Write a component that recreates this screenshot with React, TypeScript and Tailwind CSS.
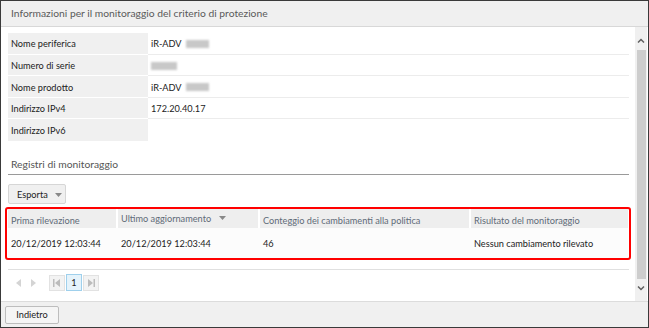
import React from 'react';

// Info rows shown at the top of the dialog
const INFO_ROWS: { label: string; value: string; blur?: 'model' | 'serial' }[] = [
  { label: 'Nome periferica', value: 'iR-ADV', blur: 'model' },
  { label: 'Numero di serie', value: '', blur: 'serial' },
  { label: 'Nome prodotto', value: 'iR-ADV', blur: 'model' },
  { label: 'Indirizzo IPv4', value: '172.20.40.17' },
  { label: 'Indirizzo IPv6', value: '' },
];

const Caret = () => (
  <svg width="7" height="4" viewBox="0 0 7 4" className="inline-block">
    <path d="M0 0 L7 0 L3.5 4 Z" fill="#888" />
  </svg>
);

const Blurred = ({ w }: { w: number }) => (
  <span className="inline-block h-[8px] bg-[#c8c8c8] blur-[1.2px] align-middle" style={{ width: w }} />
);

export default function App() {
  return (
    <div
      className="w-[649px] h-[328px] border border-[#3a3a3a] bg-white flex flex-col overflow-hidden text-[9.2px] text-[#222]"
      style={{ fontFamily: 'Lato, "Noto Sans", sans-serif' }}
    >
      {/* Header */}
      <div className="h-[26px] shrink-0 bg-[#f0f0f0] border-b border-[#d8d8d8] flex items-center pl-[10px] pt-px text-[10.3px] text-[#5a5a5a]">
        Informazioni per il monitoraggio del criterio di protezione
      </div>

      {/* Scrollable body */}
      <div className="flex-1 flex min-h-0">
        <div className="flex-1 pl-[7px] pr-[6px] pt-[6px]">
          {/* Info table */}
          <div className="flex flex-col">
            {INFO_ROWS.map((r, i) => (
              <div key={r.label} className={`flex h-[21.6px] ${i < INFO_ROWS.length - 1 ? 'border-b border-[#ececec]' : ''}`}>
                <div className={`w-[140px] bg-[#f0f0f0] flex items-center pl-[3px] pt-[2px] ${i < INFO_ROWS.length - 1 ? 'border-b border-white -mb-px' : ''}`}>
                  {r.label}
                </div>
                <div className="flex-1 flex items-center gap-[4px] pl-[3px] pt-[2px] bg-white">
                  {r.value && <span>{r.value}</span>}
                  {r.blur === 'model' && <Blurred w={23} />}
                  {r.blur === 'serial' && <Blurred w={26} />}
                </div>
              </div>
            ))}
          </div>

          {/* Section title */}
          <div className="mt-[16px] pl-[3px] pb-[2px] border-b border-[#9a9a9a] text-[10.3px] text-[#555]">
            Registri di monitoraggio
          </div>

          {/* Esporta button */}
          <div className="mt-[9px]">
            <button className="h-[20px] w-[58px] bg-[#f0f0f0] border border-[#d6d6d6] rounded-[2px] flex items-center gap-[7px] pl-[8px] pt-px text-[9.2px] text-[#222]">
              Esporta <Caret />
            </button>
          </div>

          {/* Log table */}
          <div className="mt-[3px] -ml-[3px] mr-[-2px] border-2 border-[#ff0000] rounded-[3px] px-[1px]">
            <div className="flex h-[19px] bg-[#eeeeee] text-[#5f6b78]">
              <div className="w-[110px] flex items-center pl-[3px] pt-[3px] border-r-2 border-white">Prima rilevazione</div>
              <div className="w-[142px] flex items-center gap-[8px] pl-[3px] pb-px border-r-2 border-white">
                Ultimo aggiornamento <Caret />
              </div>
              <div className="w-[211px] flex items-center pl-[3px] pt-[3px] border-r-2 border-white">
                Conteggio dei cambiamenti alla politica
              </div>
              <div className="flex-1 flex items-center pl-[3px] pt-[3px]">Risultato del monitoraggio</div>
            </div>
            <div className="flex h-[30px] bg-[#fcfcfc] items-center pt-px">
              <div className="w-[110px] pl-[3px]">20/12/2019 12:03:44</div>
              <div className="w-[142px] pl-[3px]">20/12/2019 12:03:44</div>
              <div className="w-[211px] pl-[3px]">46</div>
              <div className="flex-1 pl-[3px]">Nessun cambiamento rilevato</div>
            </div>
          </div>

          {/* Divider + pager */}
          <div className="mt-[9px] border-t border-[#e0e0e0] pt-[4px] flex items-center pl-[4px]">
            <div className="flex items-center gap-[4px]">
              <svg width="12" height="16" viewBox="0 0 12 16"><path d="M9 4 L4 8 L9 12 Z" fill="#d4d4d4" /></svg>
              <svg width="12" height="16" viewBox="0 0 12 16"><path d="M3 4 L8 8 L3 12 Z" fill="#d4d4d4" /></svg>
            </div>
            <div className="flex items-center ml-[9px] gap-px">
              <div className="w-[16px] h-[16px] bg-[#f3f3f3] border border-[#e2e2e2] flex items-center justify-center">
                <svg width="10" height="8" viewBox="0 0 10 8"><rect x="1" y="0" width="1.5" height="8" fill="#bcbcbc" /><path d="M8 0 L3 4 L8 8 Z" fill="#bcbcbc" /></svg>
              </div>
              <div className="w-[16px] h-[17px] bg-[#e5f3fb] border border-[#9fd0ec] flex items-center justify-center text-[9.2px] text-[#222]">1</div>
              <div className="w-[16px] h-[16px] bg-[#f3f3f3] border border-[#e2e2e2] flex items-center justify-center">
                <svg width="10" height="8" viewBox="0 0 10 8"><path d="M2 0 L7 4 L2 8 Z" fill="#bcbcbc" /><rect x="7.5" y="0" width="1.5" height="8" fill="#bcbcbc" /></svg>
              </div>
            </div>
          </div>
        </div>

        {/* Scrollbar */}
        <div className="w-[12px] mr-px bg-[#f0f0f0] flex flex-col items-center">
          <div className="h-[23px] flex items-center justify-center pt-[4px]">
            <svg width="8" height="5" viewBox="0 0 8 5"><path d="M1 4.5 L4 1.5 L7 4.5" stroke="#606060" strokeWidth="1.5" fill="none" /></svg>
          </div>
          <div className="w-[9px] flex-1 bg-[#cdcdcd]" />
          <div className="h-[22px] flex items-center justify-center pb-[4px]">
            <svg width="8" height="5" viewBox="0 0 8 5"><path d="M1 0.5 L4 3.5 L7 0.5" stroke="#606060" strokeWidth="1.5" fill="none" /></svg>
          </div>
        </div>
      </div>

      {/* Footer */}
      <div className="h-[26px] shrink-0 bg-[#f0f0f0] border-t border-[#dcdcdc] flex items-center pl-[4px]">
        <button className="h-[18px] w-[54px] bg-[#f5f5f5] border border-[#bdbdbd] rounded-[2px] pt-px text-[9.2px] text-[#222] flex items-center justify-center">
          Indietro
        </button>
      </div>
    </div>
  );
}
